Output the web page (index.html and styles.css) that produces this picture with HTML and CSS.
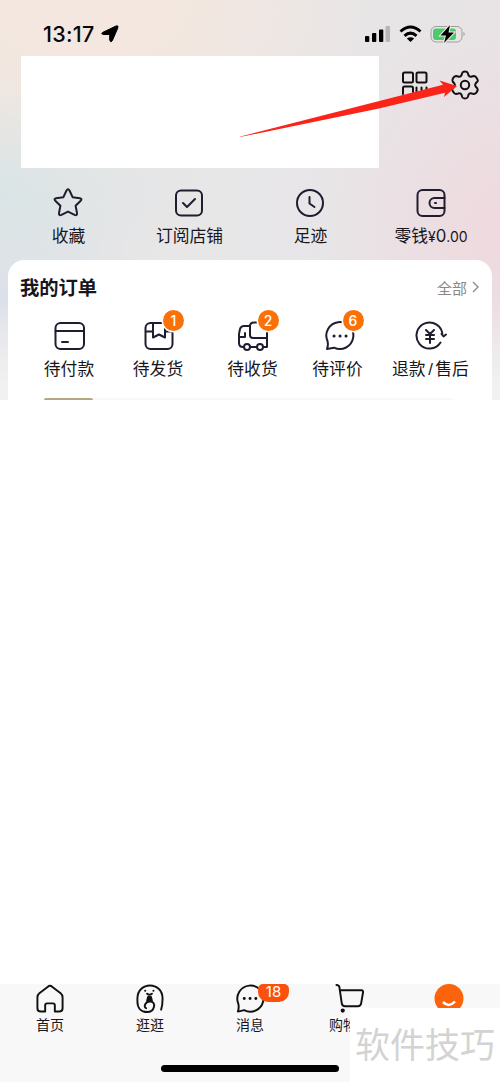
FILE: index.html
```html
<!DOCTYPE html>
<html lang="zh-CN">
<head>
<meta charset="utf-8">
<title>我的</title>
<link rel="stylesheet" href="styles.css">
</head>
<body>
<div class="screen">
  <header class="hero">
    <div class="status">
      <div class="time">13:17 <svg width="18" height="18" viewBox="0 0 18 18"><path d="M1.500 7.500 15 1Q17.800 0 16.800 3L11.300 15.700Q9.700 18.300 8.700 15V9.500H3Q-.7 9.200 1.500 7.500Z" stroke="#000"/></svg></div>
      <svg class="signals" width="104" height="20" viewBox="0 0 104 20">
        <rect x="1" y="12" width="4.300" height="6" rx="1"/><rect x="8" y="9" width="4.300" height="9" rx="1"/><rect x="15" y="5.500" width="4.300" height="12.500" rx="1"/><rect x="21.500" y="2" width="4.500" height="16" rx="1" fill="#bbb5b5"/>
        <g fill="none" stroke="#000" stroke-width="3"><path d="M36.500 7.500Q46.500-1.500 56.500 7.500M40.500 11.800Q46.500 6.500 52.500 11.800"/></g><path d="M42.800 14.500Q46.500 12 50.200 14.500L46.500 18Z"/>
        <rect x="67" y="2.500" width="31" height="15.500" rx="5" fill="none" stroke="#a29e9e"/><rect x="69" y="4.500" width="23" height="11.500" rx="3" fill="#4bcb68"/><path d="M99.500 8Q102 10 99.500 12Z" fill="#999"/>
        <path d="M86 1 76.500 11.500H82L80 19 90 8.500H84.500Z" stroke="#eee" stroke-width="2" paint-order="stroke"/>
      </svg>
    </div>
    <div class="profile">
      <div class="blank"></div>
      <div class="tools">
        <svg width="28" height="28" viewBox="0 0 28 28" class="line"><rect x="2" y="2.500" width="10" height="10" rx="1.500"/><rect x="15.500" y="2.500" width="10" height="10" rx="1.500"/><path d="M2 24V18Q2 16.500 3.500 16.500H10.500Q12 16.500 12 18V22"/><path d="M15.500 17.500V22M20.500 17.500V20M25.500 17.500V25"/></svg>
        <svg width="30" height="30" viewBox="0 0 30 30" class="line"><path d="M12.200 3Q12.800 1.500 15 1.500T17.800 3L18.500 5.200Q19.500 7.200 21.800 6.500L24 6Q25.500 5.800 27 8.500T27.200 11.800L25.600 13.500Q24.500 15 25.600 16.500L27.200 18.200Q28.200 19.500 27 21.700T24 24L21.800 23.500Q19.500 22.800 18.500 24.800L17.800 27Q17.200 28.500 15 28.500T12.200 27L11.500 24.800Q10.500 22.800 8.200 23.500L6 24Q4.500 24.200 3 21.500T2.800 18.200L4.400 16.500Q5.500 15 4.400 13.500L2.800 11.800Q1.800 10.500 3 8.300T6 6L8.200 6.500Q10.500 7.200 11.500 5.200Z"/><circle cx="15" cy="15" r="4.200"/></svg>
      </div>
    </div>
    <nav class="shortcuts">
      <div><svg class="line dark" width="30" height="30" viewBox="0 0 30 30"><path d="M13.500 2.500Q15 0 16.500 2.500L19.600 9.200 27 10.200Q29.500 10.800 27.700 12.700L22.600 17.800 24 25Q24.200 28 21.600 26.900L15 23.600 8.400 26.900Q5.800 28 6 25L7.400 17.800 2.300 12.700Q.5 10.800 3 10.200L10.400 9.200Z"/></svg><span>收藏</span></div>
      <div><svg class="line dark" width="30" height="30" viewBox="0 0 30 30"><rect x="2" y="2.500" width="26" height="25" rx="5"/><path d="m9 15 4 4 8-8"/></svg><span>订阅店铺</span></div>
      <div><svg class="line dark" width="30" height="30" viewBox="0 0 30 30"><circle cx="15" cy="15" r="13"/><path d="M14.500 9V15.500L19.500 19"/></svg><span>足迹</span></div>
      <div><svg class="line dark" width="30" height="30" viewBox="0 0 30 30"><rect x="1.500" y="2" width="27" height="26" rx="5"/><path d="M28.500 10H18.500A5 5 0 0 0 18.500 20H28.500M19 15H20"/></svg><span class="money">零钱<small>¥</small>0<small>.00</small></span></div>
    </nav>
    <section class="orders">
      <div class="heading"><h1>我的订单</h1><div class="all">全部 <svg width="8" height="12" viewBox="0 0 8 12"><path d="m1 1 5 5-5 5" fill="none" stroke="#888" stroke-width="1.300"/></svg></div></div>
      <div class="order-items">
        <div><svg class="line dark" width="32" height="30" viewBox="0 0 32 30"><rect x="2.500" y="2" width="28.500" height="26" rx="5"/><path d="M2.500 10H31M9 21H15"/></svg><span>待付款</span></div>
        <div><svg class="line dark" width="32" height="30" viewBox="0 0 32 30"><rect x="3.500" y="2" width="27" height="26" rx="5"/><path d="M4 10.500H11M23 10.500H30M11 2.500V16.500L17 13.500 23 16.500V2.500"/></svg><span>待发货</span><b>1</b></div>
        <div><svg class="line dark" width="32" height="30" viewBox="0 0 32 30"><path d="M13 5H7Q4 5 3 8L2 13V22Q2 26 6 26M13 5V14Q13 17 16 17H30M13 5Q13 1.500 17 1.500H25Q30 1.500 30 6V26H26.500M13.500 26H19.500M2 16H8V12"/><circle cx="10" cy="26" r="3"/><circle cx="23" cy="26" r="3"/></svg><span>待收货</span><b>2</b></div>
        <div><svg class="line dark shift" width="32" height="30" viewBox="0 0 32 30"><path d="M3.500 20A13.500 13.500 0 1 1 10 26.700L3 28Q4.500 24 3.500 20Z"/><path class="dots" d="M10 15H10.100M16 15H16.100M22 15H22.100"/></svg><span>待评价</span><b>6</b></div>
        <div><svg class="line dark" width="32" height="30" viewBox="0 0 32 30"><path d="M25.500 21.500A13 13 0 1 1 27.500 14M26.500 13 28.500 15.500 31 13.500M11 9 15 13 19 9M11 14H19M11 18H19M15 13V22"/></svg><span>退款<span class="slash">/</span>售后</span></div>
      </div>
      <div class="peek"><i></i><i></i></div>
    </section>
  </header>
  <main></main>
  <footer>
    <div class="tab"><svg class="line" width="30" height="30" viewBox="0 0 30 31"><path d="M12.500 3Q15 .8 17.500 3L26 9.500Q28 11 28 14V25Q28 28.500 24.500 28.500H20V22Q20 20 18 20H12Q10 20 10 22V28.500H5.500Q2 28.500 2 25V14Q2 11 4 9.500Z"/></svg><span>首页</span></div>
    <div class="tab"><svg class="line" width="30" height="30" viewBox="0 0 30 31"><path d="M26.500 26.500Q28 22 28 15C28-3 2-3 2 15V18C2 25 6 29 12 29C20 29 22 18 15 18C10 18 8 24 11 25"/><path d="M10 7H10.100M18.500 7H18.600M12 10Q14.500 12 17 10"/><path d="M13 13.500H16L17 17.500H12Z" fill="#111"/></svg><span>逛逛</span></div>
    <div class="tab"><svg class="line" width="30" height="30" viewBox="0 0 30 31"><path d="M2.800 20A13.500 13.500 0 1 1 9 27L2.500 28.500Q4 24 2.800 20Z"/><path class="dots" d="M9 15H9.100M15 15H15.100M21 15H21.100"/></svg><span>消息</span><b>18</b></div>
    <div class="tab"><svg class="line" width="30" height="30" viewBox="0 0 30 31"><path d="M1 1Q3.500 1 4 3L6.500 20Q7 23 10 23H23Q26 23 26.500 20L28.500 8.500Q28.500 6.500 27 6.500H5"/><circle cx="7.500" cy="27.500" r="1.200" fill="#111"/></svg><span class="cart-label">购物</span></div>
    <div class="tab me"><svg width="30" height="31" viewBox="0 0 30 31"><circle cx="15" cy="14.500" r="14.500" fill="#fb640c"/><path d="M9 18Q15 24 21 17.500" fill="none" stroke="#fff" stroke-width="2.500"/></svg></div>
    <div class="home-bar"></div>
    <div class="watermark">软件技巧</div>
  </footer>
  <svg class="arrow" width="218" height="58" viewBox="0 0 218 58"><path d="M.5 56.500 203 4.700 199.500.5 217 6 204 17 205 12.700 139 28.500 0 57Z" fill="#fa2419"/></svg>
</div>
</body>
</html>
```
FILE: styles.css
```css
* { box-sizing: border-box; }
body { margin: 0; font-family: "Liberation Sans", "Noto Sans CJK SC", sans-serif; color: #17161b; }
.screen { position: relative; width: 500px; height: 1082px; display: flex; flex-direction: column; overflow: hidden; background: #fff; }
svg { display: block; flex: none; }
.line { fill: none; stroke: #111; stroke-width: 2; stroke-linecap: round; stroke-linejoin: round; }
.dark { stroke: #211c2e; }
.line .dots { stroke-width: 3; }
.hero { height: 400px; padding: 22px 8px 0; background: linear-gradient(rgba(241, 241, 242, 0) 300px, #f1f1f2 385px), radial-gradient(ellipse 200px 110px at 0 195px, #dae4e6, rgba(218, 228, 230, 0)), radial-gradient(ellipse 150px 120px at 0 300px, #dbe0ea, rgba(219, 224, 234, 0)), radial-gradient(ellipse 300px 160px at 90px 10px, #f3e7df 30%, rgba(243, 231, 223, 0)), radial-gradient(ellipse 190px 220px at 510px 230px, #efd9de, rgba(239, 217, 222, 0)), linear-gradient(90deg, #ebe7e4, #e7e6e8 50%, #e8e4e6); }
.status { height: 34px; padding: 1px 24px 0 35px; display: flex; justify-content: space-between; }
.time { display: flex; align-items: center; gap: 6px; height: 22px; font: 500 21.5px/22px Inter, sans-serif; color: #080808; letter-spacing: .3px; }
.signals { margin-top: 1px; }
.profile { height: 112px; display: flex; justify-content: space-between; padding: 0 12px 0 13px; }
.blank { width: 358px; height: 112px; background: #fff; }
.tools { display: flex; gap: 21px; padding-top: 14px; }
.shortcuts { height: 92px; display: grid; grid-template-columns: repeat(4, 121px); padding-top: 20px; }
.shortcuts div { display: flex; flex-direction: column; align-items: center; gap: 7px; }
.shortcuts svg { margin-left: -2px; }
.shortcuts span { font-size: 16.8px; line-height: 24px; white-space: nowrap; }
.shortcuts small { font-size: 14px; }
.shortcuts .money { font-family: Inter, "Noto Sans CJK SC", sans-serif; margin: -1px 0 0 -1px; }
.orders { height: 140px; background: #fff; border-radius: 16px 16px 0 0; padding: 14px 12px 0; display: flex; flex-direction: column; }
.heading { height: 28px; display: flex; justify-content: space-between; }
h1 { margin: 0; padding-top: 1px; font-size: 19.3px; line-height: 27px; font-weight: 700; white-space: nowrap; }
.all { display: flex; align-items: center; gap: 5px; height: 26px; color: #888; font-size: 15px; }
.order-items { display: grid; grid-template-columns: 98px 80px 109px 61px 125px; width: 473px; height: 96px; padding-top: 19px; }
.order-items > div { position: relative; display: flex; flex-direction: column; align-items: center; gap: 7px; }
.order-items > div > span { font-size: 16.8px; line-height: 24px; white-space: nowrap; }
.order-items .shift { margin-left: 4px; }
.slash { padding: 0 2.5px; }
.order-items b { position: absolute; left: calc(50% + 5px); top: -11px; width: 21px; height: 21px; background: #fa7108; color: #fff; border-radius: 50%; box-shadow: 0 0 0 1.5px #fff; font: 500 14px/21px Inter, sans-serif; text-align: center; }
.peek { display: flex; padding: 0 27px 0 24px; }
.peek i { height: 2px; width: 49px; background: #b5a580; border-radius: 2px 2px 0 0; }
.peek i + i { flex: 1; background: #f7f7f7; }
main { flex: 1; background: #fff; }
footer { position: relative; height: 98px; background: #f8f8f8; display: grid; grid-template-columns: repeat(5, 100px); }
.tab { position: relative; display: flex; flex-direction: column; align-items: center; }
.tab span { font-size: 14px; line-height: 20px; margin-top: 1px; }
.tab .cart-label { width: 21px; margin-right: 21px; overflow: hidden; white-space: nowrap; }
.tab.me svg { margin-left: -2px; }
.tab b { position: absolute; left: 58px; top: 0; width: 31px; height: 18px; border-radius: 5px 5px 10px 10px; background: #fb510c; color: #fff; font: 400 15px/16px Inter, sans-serif; text-align: center; }
.home-bar { position: absolute; left: 161px; bottom: 10px; width: 178px; height: 7px; border-radius: 4px; background: #000; }
.watermark { position: absolute; left: 350px; top: 24px; width: 150px; height: 74px; background: #fff; color: #d3d3d3; font-size: 35px; font-weight: 400; line-height: 76px; text-align: center; white-space: nowrap; }
.arrow { position: absolute; left: 240px; top: 80px; }
```
